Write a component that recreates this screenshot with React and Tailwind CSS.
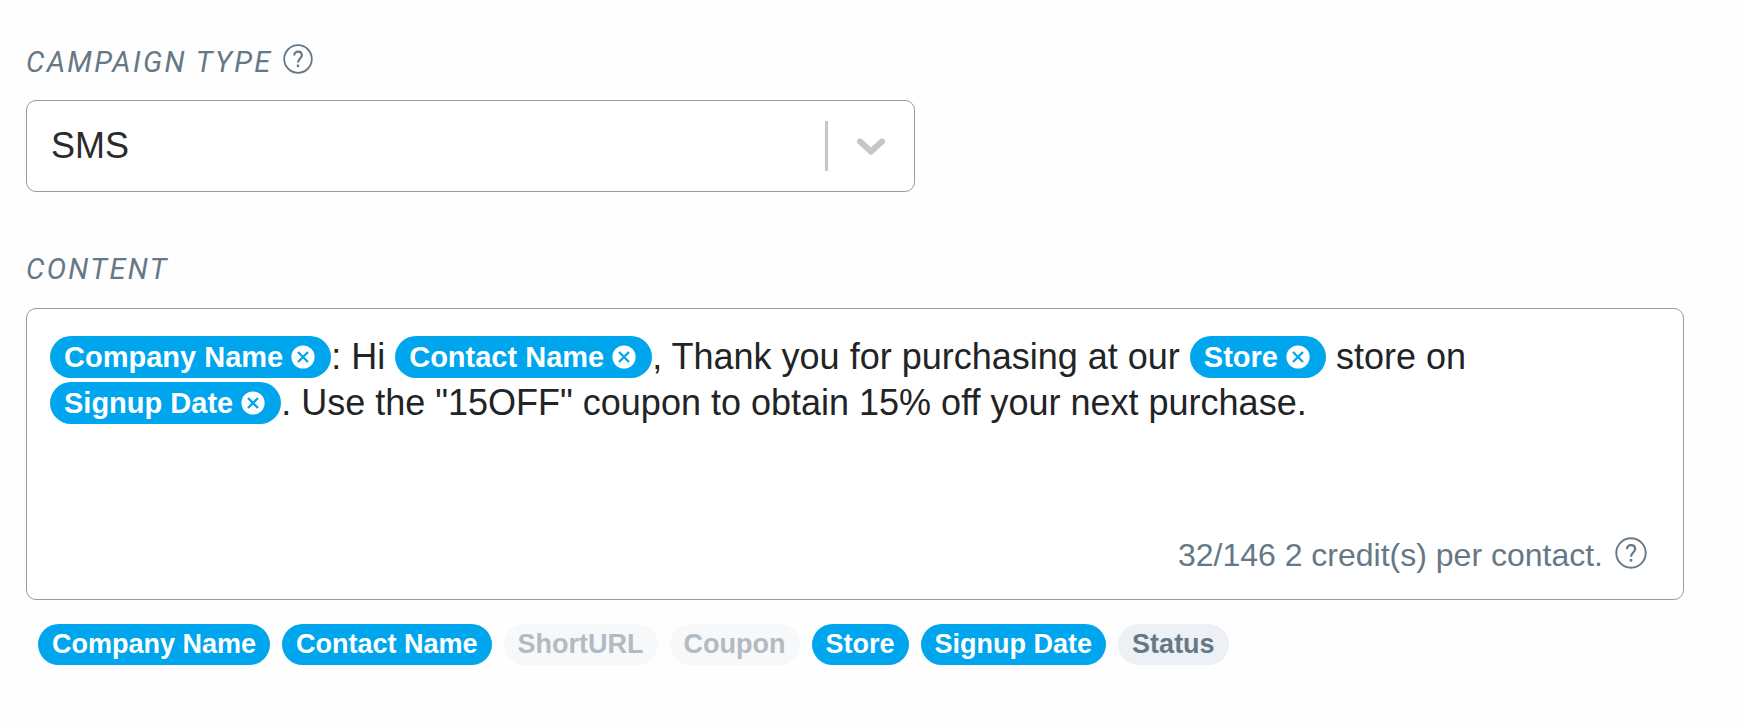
import { useState } from "react";
import clsx from "clsx";

const FIELDS = [
  { name: "Company Name" },
  { name: "Contact Name" },
  { name: "ShortURL", disabled: true },
  { name: "Coupon", disabled: true },
  { name: "Store" },
  { name: "Signup Date" },
  { name: "Status" },
];

// message parts, a part with a field is drawn as a removable tag
const INITIAL_PARTS = [
  { field: "Company Name" },
  { text: ": Hi " },
  { field: "Contact Name" },
  { text: ", Thank you for purchasing at our " },
  { field: "Store" },
  { text: " store on " },
  { field: "Signup Date" },
  { text: '. Use the "15OFF" coupon to obtain 15% off your next purchase.' },
];

const HelpIcon = ({ className }) => (
  <svg viewBox="0 0 30 30" fill="none" stroke="currentColor" className={className} aria-hidden="true">
    <circle cx="15" cy="15" r="13.8" strokeWidth="1.8" />
    <path d="M11.2 11.4c0-2.3 1.5-3.8 3.8-3.8s3.9 1.4 3.9 3.7c0 3-3.9 3.5-3.9 7.1" strokeWidth="2.1" />
    <path d="M15 20.6v2.5" strokeWidth="2.4" />
  </svg>
);

const RemoveIcon = () => (
  <svg viewBox="0 0 24 24" className="size-6" aria-hidden="true">
    <circle cx="12" cy="12" r="11.6" fill="#fff" />
    <path d="M7 7l10 10M17 7l-10 10" stroke="#00a6ed" strokeWidth="2.3" />
  </svg>
);

const Tag = ({ name, onRemove }) => (
  <span
    contentEditable={false}
    className="my-0.5 inline-flex h-[42px] items-center gap-2 rounded-full bg-[#00a6ed] pr-4 pl-3.5 align-top text-[29px] leading-none font-bold text-white"
  >
    {name}
    <button type="button" onClick={onRemove} aria-label={`Remove ${name}`}>
      <RemoveIcon />
    </button>
  </span>
);

const App = () => {
  const [type, setType] = useState("SMS");
  const [parts, setParts] = useState(INITIAL_PARTS);

  const used = parts.map((p) => p.field).filter(Boolean);

  const removeField = (name) => {
    setParts(parts.filter((p) => p.field !== name));
  };

  const toggleField = (name) => {
    if (used.includes(name)) removeField(name);
    else setParts([...parts, { field: name }]);
  };

  return (
    <main className="min-h-screen bg-[#fefefe] pt-11 pr-[58px] pb-8 pl-[26px] font-['Liberation_Sans',Arial,sans-serif]">
      {/* CAMPAIGN TYPE */}
      <div className="flex h-9 items-center gap-2.5 text-[#667886]">
        <label
          htmlFor="campaign-type"
          className="font-[Roboto,sans-serif] text-[29px] leading-9 tracking-[0.08em] uppercase italic"
        >
          Campaign type
        </label>
        <button type="button" aria-label="About campaign types" className="mb-1.5">
          <HelpIcon className="size-[30px]" />
        </button>
      </div>

      <div className="relative mt-5 w-[53.6%]">
        <select
          id="campaign-type"
          value={type}
          onChange={(e) => setType(e.target.value)}
          className="h-[92px] w-full appearance-none rounded-[10px] border border-[#999] bg-white pr-24 pl-6 text-[36px] text-[#2b2b2b]"
        >
          <option>SMS</option>
          <option>Email</option>
        </select>
        <div className="pointer-events-none absolute inset-y-[21px] right-[29px] flex items-center gap-7 text-[#c6c6c6]">
          <span className="h-full w-[3px] bg-[#c6c6c6]" />
          <svg viewBox="0 0 30 20" fill="none" className="h-5 w-[30px]" aria-hidden="true">
            <path d="M4 5.5L15 15.5L26 5.5" stroke="currentColor" strokeWidth="6" strokeLinecap="round" strokeLinejoin="round" />
          </svg>
        </div>
      </div>

      {/* CONTENT */}
      <h2
        id="content-label"
        className="mt-[59px] font-[Roboto,sans-serif] text-[29px] leading-9 tracking-[0.08em] text-[#667886] uppercase italic"
      >
        Content
      </h2>

      <section className="mt-[21px] flex min-h-[292px] flex-col justify-between rounded-[10px] border border-[#999] bg-white pt-[25px] pr-9 pb-6 pl-[23px]">
        <div
          role="textbox"
          aria-multiline="true"
          aria-labelledby="content-label"
          contentEditable
          suppressContentEditableWarning
          className="text-[36px] leading-[46px] text-[#1f2426] outline-none"
        >
          {parts.map((part, i) =>
            part.field ? (
              <Tag key={i} name={part.field} onRemove={() => removeField(part.field)} />
            ) : (
              <span key={i}>{part.text}</span>
            )
          )}
        </div>

        <div className="flex items-center justify-end gap-3 text-[32px] leading-10 text-[#667886]">
          <span>32/146 2 credit(s) per contact.</span>
          <button type="button" aria-label="About credits" className="mb-1">
            <HelpIcon className="size-8" />
          </button>
        </div>
      </section>

      {/* AVAILABLE FIELDS */}
      <div className="mt-6 flex flex-wrap gap-3 pl-3">
        {FIELDS.map(({ name, disabled }) => (
          <button
            key={name}
            type="button"
            disabled={disabled}
            onClick={() => toggleField(name)}
            className={clsx(
              "h-[41px] rounded-full px-3.5 text-[27px] leading-none font-bold",
              disabled && "bg-[#f7f8fa] text-[#b2bbc2]",
              !disabled && used.includes(name) && "bg-[#00a6ed] text-white",
              !disabled && !used.includes(name) && "bg-[#edf0f4] text-[#667886]"
            )}
          >
            {name}
          </button>
        ))}
      </div>
    </main>
  );
};

export default App;
